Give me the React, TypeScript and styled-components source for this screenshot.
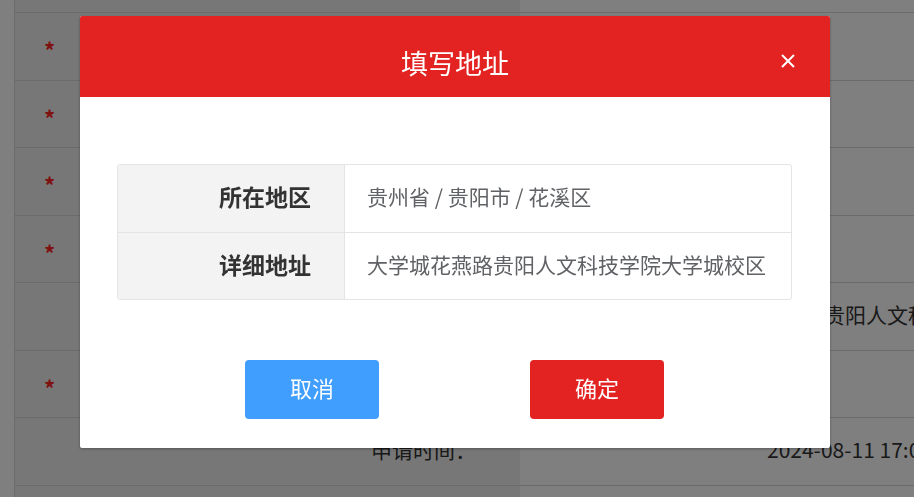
import React from "react";
import styled, { createGlobalStyle } from "styled-components";

const GlobalStyle = createGlobalStyle`
  * { box-sizing: border-box; }
  html, body {
    margin: 0;
    padding: 0;
    background: #fff;
    overflow: hidden;
  }
  body {
    font-family: "Noto Sans CJK SC", "Microsoft YaHei", sans-serif;
  }
`;

/* ---------- form page behind the dialog ---------- */

const Page = styled.div`
  width: 914px;
  height: 497px;
  overflow: hidden;
  padding-left: 14px;
`;

const FormTable = styled.div`
  width: 1100px;
  margin-top: -54.5px;
  border-left: 1px solid #d6d6d6;
`;

const FormRow = styled.div`
  display: grid;
  grid-template-columns: 505px 1fr;
  height: 67.5px;
  border-bottom: 1px solid #d6d6d6;
`;

const LabelCell = styled.div`
  display: flex;
  align-items: center;
  background: #eeeeee;
  padding: 0 44px 4px 29px;
  font-size: 21px;
  color: #333;
`;

const Star = styled.span`
  color: #f22;
  font-size: 22px;
  font-weight: 700;
  line-height: 22px;
  padding-top: 10px;
`;

const LabelText = styled.span`
  margin-left: auto;
  white-space: nowrap;
`;

const ValueCell = styled.div<{ $indent: number }>`
  display: flex;
  align-items: center;
  padding: 0 0 4px ${(p) => p.$indent}px;
  font-size: 21px;
  color: #333;
  white-space: nowrap;
`;

/* ---------- dialog ---------- */

const Mask = styled.div`
  position: fixed;
  inset: 0;
  background: rgba(0, 0, 0, 0.5);
  display: flex;
  justify-content: center;
  align-items: flex-start;
  padding: 16px 4px 0 0;
`;

const Dialog = styled.div`
  width: 750px;
  background: #fff;
  border-radius: 2px;
  overflow: hidden;
  box-shadow: 0 1px 3px rgba(0, 0, 0, 0.3);
`;

const Header = styled.div`
  height: 81px;
  background: #e32322;
  padding: 33px 35px 0;
  display: grid;
  grid-template-columns: 1fr auto 1fr;
  align-items: start;
`;

const Title = styled.h2`
  grid-column: 2;
  margin: 0;
  color: #fff;
  font-size: 27px;
  line-height: 28px;
  font-weight: 400;
`;

const CloseButton = styled.button`
  grid-column: 3;
  justify-self: end;
  margin-top: 5px;
  width: 14px;
  height: 14px;
  padding: 0;
  border: 0;
  background: none;
  cursor: pointer;
  display: flex;
`;

const Body = styled.div`
  padding: 67px 38px 0 37px;
`;

const InfoTable = styled.div`
  border: 1px solid #e4e4e4;
  border-radius: 3px;
  overflow: hidden;
`;

const InfoRow = styled.div`
  display: grid;
  grid-template-columns: 227px 1fr;
  min-height: 67px;
  & + & {
    border-top: 1px solid #e4e4e4;
  }
`;

const InfoLabel = styled.div`
  display: flex;
  align-items: center;
  justify-content: flex-end;
  padding: 0 33px 5px 0;
  background: #f3f3f3;
  border-right: 1px solid #e4e4e4;
  font-size: 23px;
  font-weight: 700;
  color: #333;
`;

const InfoValue = styled.div`
  display: flex;
  align-items: center;
  padding: 0 0 5px 22px;
  font-size: 21px;
  color: #606266;
`;

const Footer = styled.div`
  display: flex;
  justify-content: center;
  gap: 151px;
  padding: 60px 1px 29px 0;
`;

const ActionButton = styled.button<{ $tone: "plain" | "danger" }>`
  width: 134px;
  height: 59px;
  padding: 0 0 5px;
  border: 0;
  border-radius: 4px;
  font-family: inherit;
  font-size: 22px;
  color: #fff;
  cursor: pointer;
  background: ${(p) => (p.$tone === "danger" ? "#e32322" : "#409eff")};
`;

const CloseIcon = () => (
  <svg width="14" height="14" viewBox="0 0 14 14" fill="none">
    <path d="M1 1L13 13M13 1L1 13" stroke="#fff" strokeWidth="2" />
  </svg>
);

type FormItem = { label: string; value?: string; required?: boolean; indent?: number };

const formItems: FormItem[] = [
  { label: "" },
  { label: "申请人：", required: true },
  { label: "联系电话：", required: true },
  { label: "所在学校：", required: true },
  { label: "所在地区：", required: true },
  { label: "详细地址：", value: "花溪区贵阳人文科技学院大学城校区", indent: 241 },
  { label: "申请原因：", required: true },
  { label: "申请时间：", value: "2024-08-11 17:00:00" },
  { label: "" },
];

export default function App() {
  return (
    <>
      <GlobalStyle />
      <Page>
        <FormTable>
          {formItems.map((item, i) => (
            <FormRow key={i}>
              <LabelCell>
                {item.required && <Star>*</Star>}
                <LabelText>{item.label}</LabelText>
              </LabelCell>
              <ValueCell $indent={item.indent ?? 247}>{item.value}</ValueCell>
            </FormRow>
          ))}
        </FormTable>
      </Page>

      <Mask>
        <Dialog>
          <Header>
            <Title>填写地址</Title>
            <CloseButton aria-label="关闭">
              <CloseIcon />
            </CloseButton>
          </Header>
          <Body>
            <InfoTable>
              <InfoRow>
                <InfoLabel>所在地区</InfoLabel>
                <InfoValue>贵州省 / 贵阳市 / 花溪区</InfoValue>
              </InfoRow>
              <InfoRow>
                <InfoLabel>详细地址</InfoLabel>
                <InfoValue>大学城花燕路贵阳人文科技学院大学城校区</InfoValue>
              </InfoRow>
            </InfoTable>
          </Body>
          <Footer>
            <ActionButton $tone="plain">取消</ActionButton>
            <ActionButton $tone="danger">确定</ActionButton>
          </Footer>
        </Dialog>
      </Mask>
    </>
  );
}
